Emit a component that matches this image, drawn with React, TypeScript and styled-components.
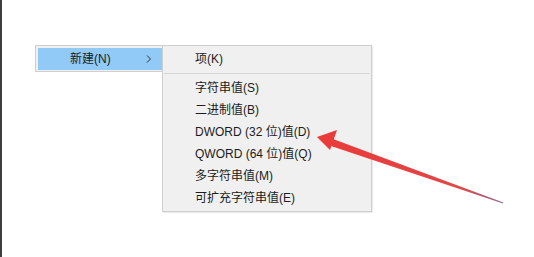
import * as React from 'react'
import styled, { createGlobalStyle } from 'styled-components'

const GlobalStyle = createGlobalStyle`
  html, body {
    margin: 0;
    padding: 0;
    background: #ffffff;
  }
  body {
    font-family: "Liberation Sans", "Noto Sans CJK SC", sans-serif;
    font-size: 12px;
    color: #1c1c1c;
  }
`

const Screen = styled.div`
  position: relative;
  display: flex;
  width: 534px;
  height: 257px;
  overflow: hidden;
  background: #ffffff;
`

const EdgeStrip = styled.div`
  width: 2px;
  flex: none;
  background: #3f3f3f;
`

const Canvas = styled.div`
  display: flex;
  align-items: flex-start;
  padding: 45px 0 0 33px;
`

const Menu = styled.div<{ $width: number }>`
  width: ${p => p.$width}px;
  box-sizing: border-box;
  background: #f0f0f0;
  border: 1px solid #cfcfcf;
  display: flex;
  flex-direction: column;
`

const ParentMenu = styled(Menu)`
  padding: 2px 0 1px 2px;
`

const SubMenu = styled(Menu)`
  margin-left: -1px;
  padding: 2px 0 2px 0;
  box-shadow: 1px 1px 1px rgba(0, 0, 0, 0.08);
`

const Item = styled.div<{ $active?: boolean; $indent: number }>`
  height: 22px;
  display: flex;
  align-items: center;
  padding-left: ${p => p.$indent}px;
  padding-right: 8px;
  background: ${p => (p.$active ? '#91c9f7' : 'transparent')};
  white-space: nowrap;
  line-height: 22px;
`

const Label = styled.span`
  flex: 1;
`

const Chevron = styled.svg`
  width: 6px;
  height: 8px;
  margin-right: 2px;
`

const Separator = styled.div`
  height: 1px;
  margin: 3px 1px 3px 1px;
  background: #d7d7d7;
`

const ArrowLayer = styled.svg`
  position: absolute;
  left: 0;
  top: 0;
  pointer-events: none;
`

const subItems = [
  '字符串值(S)',
  '二进制值(B)',
  'DWORD (32 位)值(D)',
  'QWORD (64 位)值(Q)',
  '多字符串值(M)',
  '可扩充字符串值(E)',
]

const App = () => (
  <>
    <GlobalStyle />
    <Screen>
      <EdgeStrip />
      <Canvas>
        <ParentMenu $width={128}>
          <Item $active $indent={32}>
            <Label>新建(N)</Label>
            <Chevron viewBox="0 0 6 8">
              <path d="M1 0.5 L4.5 4 L1 7.5" fill="none" stroke="#333" strokeWidth="1" />
            </Chevron>
          </Item>
        </ParentMenu>
        <SubMenu $width={210}>
          <Item $indent={32}>项(K)</Item>
          <Separator />
          {subItems.map(text => (
            <Item key={text} $indent={32}>
              {text}
            </Item>
          ))}
        </SubMenu>
      </Canvas>
      <ArrowLayer width="534" height="257" viewBox="0 0 534 257">
        <defs>
          <linearGradient id="shaft" x1="332" y1="142" x2="503" y2="203" gradientUnits="userSpaceOnUse">
            <stop offset="0" stopColor="#ea3b3b" />
            <stop offset="0.75" stopColor="#e24646" />
            <stop offset="1" stopColor="#8a6a8a" />
          </linearGradient>
        </defs>
        <polygon points="333,139 331,146 503,203.4 503.3,202.6" fill="url(#shaft)" />
        <polygon points="317,137 337,130 330,150" fill="#ea3b3b" />
      </ArrowLayer>
    </Screen>
  </>
)

export default App
